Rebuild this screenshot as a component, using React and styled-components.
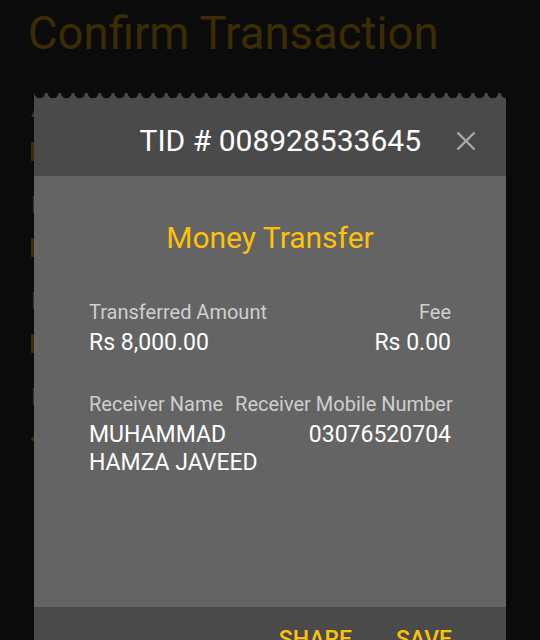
import React from 'react';
import styled, { createGlobalStyle } from 'styled-components';

const GlobalStyle = createGlobalStyle`
  html, body {
    margin: 0;
    padding: 0;
    background: #0b0b0b;
    font-family: Roboto, "Liberation Sans", Arial, sans-serif;
  }
`;

const Page = styled.div`
  width: 540px;
  height: 640px;
  overflow: hidden;
  position: relative;
  background: #0b0b0b;
`;

const PageTitle = styled.h1`
  margin: 0;
  padding: 7px 0 0 28px;
  font-size: 45.5px;
  line-height: 54px;
  font-weight: 400;
  color: #3b2c02;
`;

const FormList = styled.div`
  display: flex;
  flex-direction: column;
  padding: 36px 0 0 31px;
`;

const FormLabel = styled.div`
  font-size: 24px;
  line-height: 24px;
  color: #363636;
`;

const FormValue = styled.div`
  width: 120px;
  height: ${p => (p.round ? '18px' : '19px')};
  margin: 21px 0 32px;
  border-radius: ${p => (p.round ? '50%' : '0')};
  background: #3b2c02;
`;

const Overlay = styled.div`
  position: absolute;
  inset: 0;
  padding: 93px 34px 0;
`;

const Card = styled.div`
  width: 472px;
  display: flex;
  flex-direction: column;
`;

const Header = styled.div`
  height: 83px;
  display: flex;
  align-items: center;
  justify-content: flex-end;
  gap: 35px;
  padding: 13px 30px 0 0;
  box-sizing: border-box;
  background:
    radial-gradient(circle at 50% 0, #0b0b0b 5px, transparent 5.6px) -1px 0 / 13.33px 10px repeat-x,
    #4a4a4a;
`;

const Tid = styled.div`
  font-size: 30px;
  line-height: 36px;
  color: #ffffff;
`;

const CloseButton = styled.button`
  border: 0;
  padding: 0;
  background: none;
  width: 20px;
  height: 20px;
  display: flex;
  cursor: pointer;
`;

const Body = styled.div`
  background: #646464;
  padding: 45px 55px 130px;
`;

const Heading = styled.div`
  text-align: center;
  font-size: 30px;
  line-height: 34px;
  color: #ffc107;
`;

const Section = styled.div`
  margin-top: ${p => p.top}px;
`;

const Row = styled.div`
  display: flex;
  justify-content: space-between;
  align-items: flex-start;
  gap: 12px;
`;

const Label = styled.div`
  font-size: 20px;
  line-height: 24px;
  color: #cfcfcf;
  white-space: nowrap;
`;

const Value = styled.div`
  font-size: 23px;
  line-height: 28px;
  color: #ffffff;
  max-width: ${p => p.wrap || 'none'};
`;

const ValueRow = styled(Row)`
  margin-top: 5px;
`;

const Footer = styled.div`
  background: #4a4a4a;
  display: flex;
  justify-content: flex-end;
  gap: 44px;
  padding: 20px 54px 20px 0;
`;

const Action = styled.button`
  border: 0;
  padding: 0;
  background: none;
  font-family: inherit;
  font-size: 23px;
  line-height: 26px;
  font-weight: 500;
  color: #ffc107;
  cursor: pointer;
`;

const CloseIcon = () => (
  <svg width="20" height="20" viewBox="0 0 20 20">
    <path d="M1.5 1.5 18.5 18.5 M18.5 1.5 1.5 18.5" stroke="#a9a9a9" strokeWidth="2.4" fill="none" />
  </svg>
);

const background = [
  { label: 'Amount' },
  { label: 'Receiver' },
  { label: 'Mobile' },
  { label: 'Purpose', round: true },
];

const App = () => (
  <Page>
    <GlobalStyle />
    <PageTitle>Confirm Transaction</PageTitle>
    <FormList>
      {background.map((item, i) => (
        <div key={i}>
          <FormLabel>{item.label}</FormLabel>
          <FormValue round={item.round} />
        </div>
      ))}
    </FormList>
    <Overlay>
      <Card>
        <Header>
          <Tid>TID # 008928533645</Tid>
          <CloseButton aria-label="Close">
            <CloseIcon />
          </CloseButton>
        </Header>
        <Body>
          <Heading>Money Transfer</Heading>
          <Section top={45}>
            <Row>
              <Label>Transferred Amount</Label>
              <Label>Fee</Label>
            </Row>
            <ValueRow>
              <Value>Rs 8,000.00</Value>
              <Value>Rs 0.00</Value>
            </ValueRow>
          </Section>
          <Section top={35}>
            <Row>
              <Label>Receiver Name</Label>
              <Label>Receiver Mobile Number</Label>
            </Row>
            <ValueRow>
              <Value wrap="180px">MUHAMMAD HAMZA JAVEED</Value>
              <Value>03076520704</Value>
            </ValueRow>
          </Section>
        </Body>
        <Footer>
          <Action>SHARE</Action>
          <Action>SAVE</Action>
        </Footer>
      </Card>
    </Overlay>
  </Page>
);

export default App;
